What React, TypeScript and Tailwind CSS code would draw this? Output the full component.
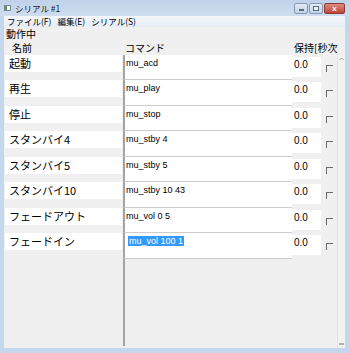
import React from "react";

type Row = { name: string; cmd: string; selected?: boolean };

const rows: Row[] = [
  { name: "起動", cmd: "mu_acd" },
  { name: "再生", cmd: "mu_play" },
  { name: "停止", cmd: "mu_stop" },
  { name: "スタンバイ4", cmd: "mu_stby 4" },
  { name: "スタンバイ5", cmd: "mu_stby 5" },
  { name: "スタンバイ10", cmd: "mu_stby 10 43" },
  { name: "フェードアウト", cmd: "mu_vol 0 5" },
  { name: "フェードイン", cmd: "mu_vol 100 1", selected: true },
];

export default function App() {
  return (
    <div className="w-[349px] h-[353px] bg-[#c5d7ed] flex flex-col overflow-hidden text-black font-['Noto_Sans_CJK_JP',sans-serif]">
      {/* タイトルバー */}
      <div className="h-[16px] flex items-start px-[4px] bg-gradient-to-b from-[#bfd2ea] to-[#cfdef0]">
        <div className="mt-[5px] w-[7px] h-[6px] bg-white border border-[#7a8a9a] flex">
          <div className="w-[2px] h-full bg-[#4a9a5a]" />
        </div>
        <span className="ml-[4px] mt-[2px] text-[8.5px] leading-[12px] text-[#1a1a1a]">シリアル #1</span>
        <div className="ml-auto mt-[3px] flex gap-[1px]">
          <WinButton>
            <div className="w-[5px] h-[2px] bg-white border border-[#5a6a7a] mt-[3px]" />
          </WinButton>
          <WinButton>
            <div className="w-[6px] h-[5px] border border-[#5a6a7a] bg-white/60" />
          </WinButton>
          <div className="w-[21px] h-[11px] rounded-[2px] border border-[#8a3a3a] bg-gradient-to-b from-[#e08a80] to-[#c04535] flex items-center justify-center text-white text-[8px] leading-none font-bold font-['Liberation_Sans',sans-serif]">
            x
          </div>
        </div>
      </div>

      {/* メニュー */}
      <div className="h-[11px] mx-[4px] bg-gradient-to-b from-[#f4f7fb] to-[#e6edf6] flex items-center gap-[6px] pl-[3px] text-[8.5px] leading-none">
        <span>ファイル(F)</span>
        <span>編集(E)</span>
        <span>シリアル(S)</span>
      </div>

      {/* クライアント領域 */}
      <div className="mx-[4px] mb-[5px] flex-1 bg-[#f0f0f0] flex flex-col">
        <div className="h-[13px] pl-[2px] pt-[1px] text-[10px] leading-[12px]">動作中</div>
        <div className="h-[15px] flex text-[10px] leading-[15px]">
          <span className="w-[121px] pl-[8px]">名前</span>
          <span className="w-[169px]">コマンド</span>
          <span className="w-[48px] overflow-hidden whitespace-nowrap">保持[秒次</span>
        </div>

        <div className="flex-1 flex">
          <div className="flex flex-col">
            {rows.map((r, i) => (
              <div key={r.name} className={`flex ${i % 2 === 0 ? "h-[25px]" : "h-[26px]"}`}>
                <div className="w-[119px] pl-[1px]">
                  <div className="h-[17px] w-[117px] bg-white pl-[4px] text-[11px] leading-[17px] whitespace-nowrap">
                    {r.name}
                  </div>
                </div>
                <div className="w-[169px] bg-white border-l-2 border-l-[#a3a3a3] border-b border-b-[#cdcdcd] pl-[1px] pt-[2px] text-[9px] leading-[12px] font-['Liberation_Sans',sans-serif] whitespace-nowrap">
                  {r.selected ? (
                    <span className="ml-[2px] px-[1px] bg-[#3399ff] text-white">{r.cmd}</span>
                  ) : (
                    r.cmd
                  )}
                </div>
                <div className="w-[45px] flex items-start">
                  <div className="mt-[2px] w-[29px] h-[20px] bg-white pl-[2px] pt-[2px] text-[10px] leading-[12px] font-['Liberation_Sans',sans-serif]">
                    0.0
                  </div>
                  <div className="ml-[5px] mt-[10px] w-[7px] h-[7px] border-t border-l border-[#6a6a6a]" />
                </div>
              </div>
            ))}
            <div className="flex-1 flex pb-[2px]">
              <div className="w-[119px]" />
              <div className="w-[169px] border-l-2 border-l-[#a3a3a3]" />
              <div className="w-[45px]" />
            </div>
          </div>

          {/* スクロールバー */}
          <div className="w-[8px] border-l border-[#e2e2e2] bg-[#f2f2f2] flex flex-col items-center justify-between pt-[2px] pb-[3px]">
            <svg width="5" height="4" viewBox="0 0 5 4">
              <path d="M0.5 3 L2.5 1 L4.5 3" fill="none" stroke="#9a9a9a" strokeWidth="1" />
            </svg>
            <div className="w-[5px] h-[2px] bg-[#b0b0b0]" />
          </div>
        </div>
      </div>
    </div>
  );
}

function WinButton({ children }: { children: React.ReactNode }) {
  return (
    <div className="w-[14px] h-[11px] rounded-[2px] border border-[#8799b2] bg-gradient-to-b from-[#e3ebf5] to-[#c2d2e6] flex items-center justify-center">
      {children}
    </div>
  );
}
